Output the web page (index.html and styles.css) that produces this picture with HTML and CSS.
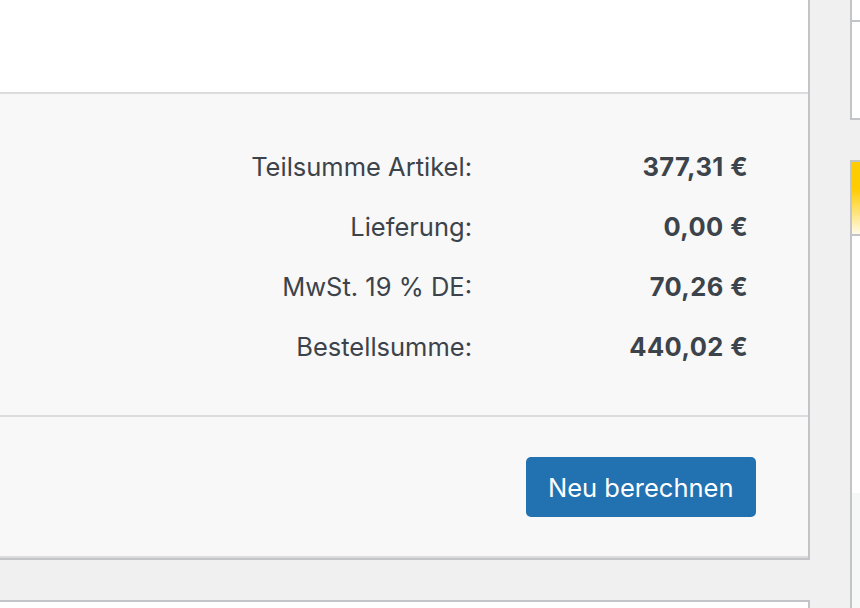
FILE: index.html
```html
<!DOCTYPE html>
<html lang="de">
<head>
<meta charset="utf-8">
<title>Bestellung</title>
<link rel="stylesheet" href="styles.css">
</head>
<body>
<div class="page">
  <section class="order-panel">
    <div class="items"></div>
    <div class="totals-row">
      <div class="totals">
        <div class="label">Teilsumme Artikel:</div>
        <div class="value">377,31&nbsp;€</div>
        <div class="label">Lieferung:</div>
        <div class="value">0,00&nbsp;€</div>
        <div class="label">MwSt. 19 % DE:</div>
        <div class="value">70,26&nbsp;€</div>
        <div class="label">Bestellsumme:</div>
        <div class="value">440,02&nbsp;€</div>
      </div>
    </div>
    <div class="actions-row">
      <button class="btn-primary" type="button">Neu berechnen</button>
    </div>
    <div class="actions-end"></div>
  </section>
  <aside class="side">
    <div class="side-box">
      <div class="side-head"></div>
      <div class="side-body"></div>
    </div>
    <div class="side-box promo">
      <div class="promo-head"></div>
      <div class="promo-body"></div>
      <div class="promo-foot"></div>
    </div>
  </aside>
  <section class="next-panel"></section>
</div>
</body>
</html>
```

FILE: styles.css
```css
html, body {
  margin: 0;
  padding: 0;
  background: #f0f0f1;
  overflow: hidden;
  height: 100%;
}

body {
  font-family: Inter, "Noto Sans", "Liberation Sans", sans-serif;
  color: #3c434a;
}

.page {
  display: grid;
  grid-template-columns: 830px 300px;
  grid-template-rows: auto auto;
  column-gap: 40px;
  row-gap: 40px;
  margin: -10px 0 0 -20px;
  align-items: start;
}

.order-panel {
  grid-column: 1;
  grid-row: 1;
  border: 2px solid #c3c4c7;
  background: #fff;
}

.items {
  height: 100px;
  background: #fff;
}

.totals-row {
  border-top: 2px solid #dcdcde;
  background: #f8f8f8;
  display: flex;
  justify-content: flex-end;
  padding: 42px 60px 39px 0;
}

.totals {
  display: grid;
  grid-template-columns: auto 276px;
  grid-auto-rows: 60px;
  align-items: center;
  font-size: 25.5px;
}

.label {
  text-align: right;
}

.value {
  text-align: right;
  font-weight: 700;
  letter-spacing: 0.4px;
}

.actions-row {
  border-top: 2px solid #dcdcde;
  background: #f8f8f8;
  display: flex;
  justify-content: flex-end;
  padding: 40px 52px 39px 0;
}

.actions-end {
  height: 0;
  border-top: 2px solid #dcdcde;
}

.btn-primary {
  font-family: inherit;
  font-size: 25.5px;
  height: 60px;
  padding: 0 22.5px;
  border: none;
  border-radius: 5px;
  background: #2271b1;
  color: #fff;
  cursor: pointer;
}

.next-panel {
  grid-column: 1;
  grid-row: 2;
  height: 100px;
  border: 2px solid #c3c4c7;
  background: #fff;
}

.side {
  grid-column: 2;
  grid-row: 1 / span 2;
  display: flex;
  flex-direction: column;
  gap: 40px;
}

.side-box {
  border: 2px solid #c3c4c7;
  background: #fff;
}

.side-head {
  height: 28px;
  border-bottom: 2px solid #c3c4c7;
}

.side-body {
  height: 96px;
}

.promo-head {
  height: 72px;
  border-bottom: 2px solid #c3c4c7;
  background: linear-gradient(#ffcc00 0, #ffcc00 38%, #fffaea 100%);
}

.promo-body {
  height: 257px;
  background: #fff;
}

.promo-foot {
  height: 200px;
  background: #f6f7f7;
}
```
